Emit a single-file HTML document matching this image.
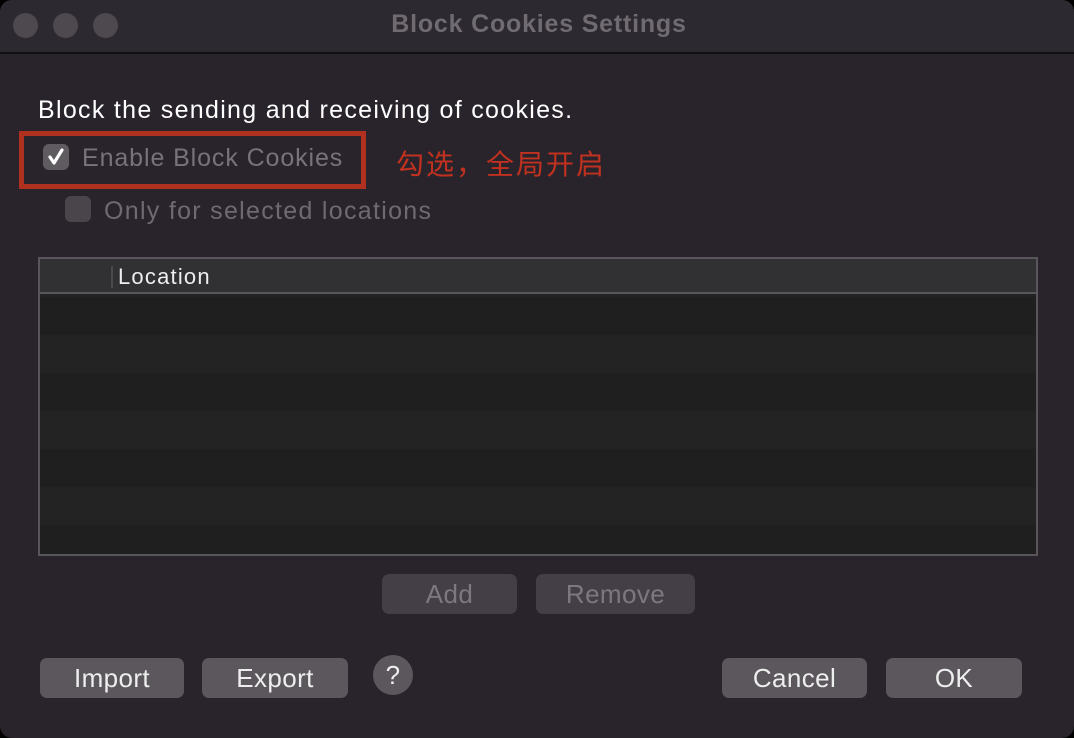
<!DOCTYPE html>
<html><head><meta charset="utf-8"><style>
body{margin:0;width:1074px;height:738px;background:#000;overflow:hidden;font-family:"Liberation Sans","Noto Sans CJK SC",sans-serif}
.win{position:absolute;left:0;top:0;width:1074px;height:738px;background:#29242b;border-radius:12px;overflow:hidden}
.tb{position:absolute;left:0;top:0;width:1074px;height:52px;background:#2d2930;border-bottom:2px solid #111}
.dot{position:absolute;top:13px;width:25px;height:25px;border-radius:50%;background:#4d494f}
.title{position:absolute;left:0;right:0;top:10px;text-align:center;padding-left:4px;font-size:25px;letter-spacing:0.8px;font-weight:bold;color:#6f6b71}
.t{position:absolute;white-space:nowrap}
.cb{position:absolute;width:26px;height:26px;border-radius:6px;background:#5f5b61}
.btn{position:absolute;height:40px;border-radius:7px;background:#5b575d;color:#eee;font-size:26px;letter-spacing:0.4px;text-align:center;line-height:41px}
.dis{background:#443f46;color:#7c787e}
</style></head><body><div class="win">
<div class="tb"><div class="dot" style="left:13px"></div><div class="dot" style="left:53px"></div><div class="dot" style="left:93px"></div><div class="title">Block Cookies Settings</div></div>
<div class="t" style="left:38px;top:96px;font-size:25px;letter-spacing:1.3px;color:#fff">Block the sending and receiving of cookies.</div>
<div style="position:absolute;left:19px;top:131px;width:337px;height:48px;border:5px solid #b03020"></div>
<div class="cb" style="left:43px;top:144px"><svg width="26" height="26"><path d="M7 13 L11 19 L19 6" fill="none" stroke="#fff" stroke-width="3.2" stroke-linecap="round" stroke-linejoin="round"/></svg></div>
<div class="t" style="left:82px;top:144px;font-size:25px;letter-spacing:0.9px;color:#77737a">Enable Block Cookies</div>
<div class="t" style="left:396px;top:143px;font-size:28px;letter-spacing:2px;color:#c0311f">勾选，全局开启</div>
<div class="cb" style="left:65px;top:196px;background:#49454b"></div>
<div class="t" style="left:104px;top:197px;font-size:25px;letter-spacing:1.3px;color:#6e6a70">Only for selected locations</div>
<div style="position:absolute;left:38px;top:257px;width:996px;height:295px;border:2px solid #58565a;background:repeating-linear-gradient(#232323 0 38px,#1f1f1f 38px 76px)">
<div style="position:absolute;left:0;top:0;width:996px;height:33px;background:#313033;border-bottom:2px solid #58565a"></div>
<div style="position:absolute;left:71px;top:7px;width:2px;height:22px;background:#4a494c"></div>
<div class="t" style="left:78px;top:5px;font-size:22px;letter-spacing:1.2px;color:#eee">Location</div>
</div>
<div class="btn dis" style="left:382px;top:574px;width:135px">Add</div>
<div class="btn dis" style="left:536px;top:574px;width:159px">Remove</div>
<div class="btn" style="left:40px;top:658px;width:144px">Import</div>
<div class="btn" style="left:202px;top:658px;width:146px">Export</div>
<div class="btn" style="left:373px;top:655px;width:40px;height:40px;border-radius:50%;line-height:40px;font-size:26px">?</div>
<div class="btn" style="left:722px;top:658px;width:145px">Cancel</div>
<div class="btn" style="left:886px;top:658px;width:136px">OK</div>
</div></body></html>
